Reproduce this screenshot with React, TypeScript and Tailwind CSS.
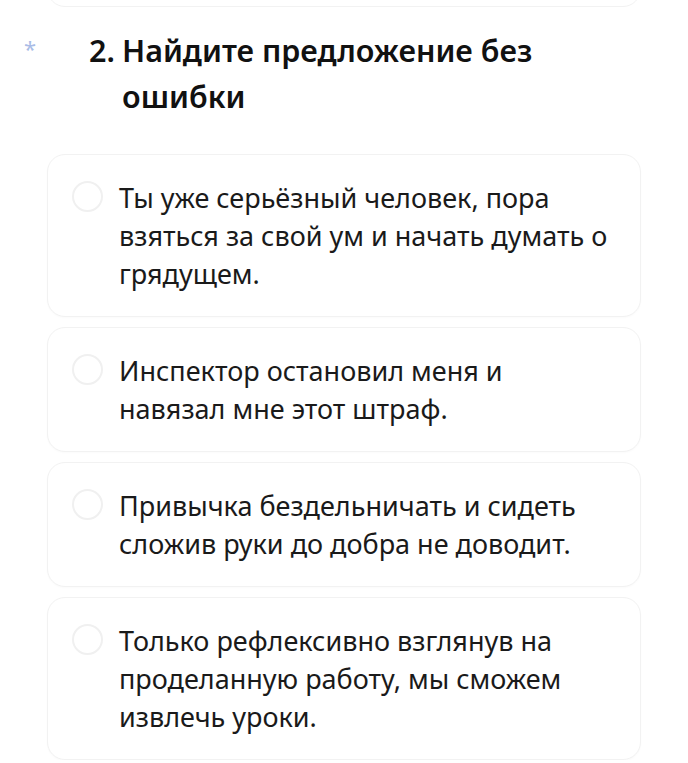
const options = [
  "Ты уже серьёзный человек, пора взяться за свой ум и начать думать о грядущем.",
  "Инспектор остановил меня и навязал мне этот штраф.",
  "Привычка бездельничать и сидеть сложив руки до добра не доводит.",
  "Только рефлексивно взглянув на проделанную работу, мы сможем извлечь уроки.",
];

function Option({ text }: { text: string }) {
  return (
    <label className="flex items-start gap-[16px] rounded-[18px] border border-[#f2f2f2] bg-white pl-[24px] pr-[30px] py-[23.5px] shadow-[0_1px_2px_rgba(0,0,0,0.02)]">
      <span className="mt-[2px] h-[31px] w-[31px] shrink-0 rounded-full border-2 border-[#f0f0f0]" />
      <span className="text-[27px] leading-[38px] text-[#1a1a1a]">{text}</span>
    </label>
  );
}

export default function App() {
  return (
    <div
      className="min-h-screen bg-white"
      style={{ fontFamily: '"Noto Sans", "Open Sans", sans-serif' }}
    >
      <div className="px-[47px]">
        <div className="-mt-[40px] h-[47px] rounded-[18px] border border-[#f2f2f2]" />
      </div>

      {/* вопрос */}
      <div className="flex pl-[24px] pr-[47px] pt-[20px]">
        <span className="mt-[6px] w-[65px] shrink-0 text-[22px] leading-[30px] text-[#a9bce6]">*</span>
        <h2 className="flex text-[30.5px] font-semibold leading-[46px] text-[#111]">
          <span className="w-[33px] shrink-0">2.</span>
          <span>Найдите предложение без ошибки</span>
        </h2>
      </div>

      <div className="mt-[35px] flex flex-col gap-[10px] px-[47px]">
        {options.map((o) => (
          <Option key={o} text={o} />
        ))}
      </div>
    </div>
  );
}
